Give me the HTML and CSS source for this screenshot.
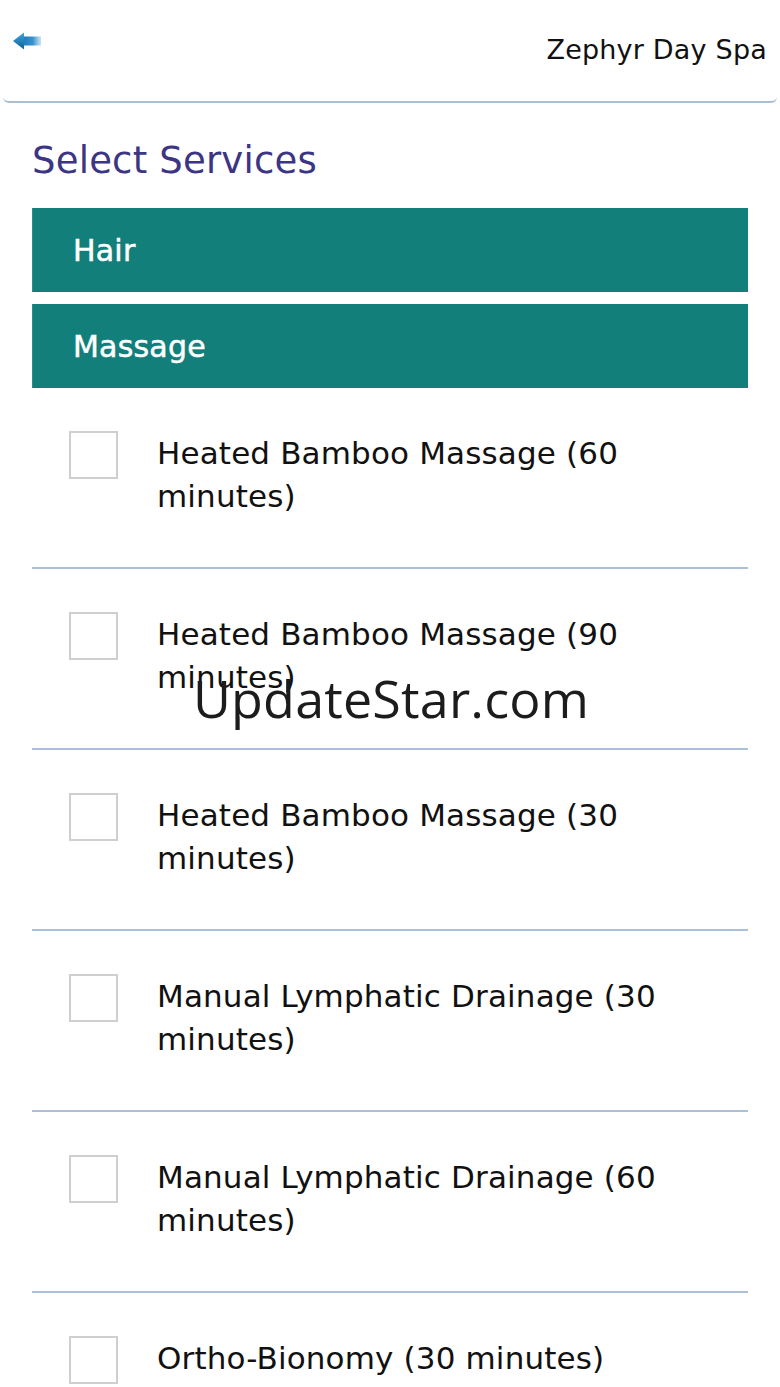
FILE: index.html
```html
<!DOCTYPE html>
<html lang="en">
<head>
<meta charset="utf-8">
<title>Zephyr Day Spa - Select Services</title>
<link rel="stylesheet" href="styles.css">
</head>
<body>
<header class="topbar">
  <a class="back" href="#" aria-label="Back">
    <svg width="30" height="22" viewBox="0 0 30 22">
      <defs>
        <linearGradient id="shaft" x1="0" y1="0" x2="1" y2="0">
          <stop offset="0" stop-color="#1677b8"/>
          <stop offset="0.6" stop-color="#3a93cf"/>
          <stop offset="1" stop-color="#6aaad6" stop-opacity="0.35"/>
        </linearGradient>
        <linearGradient id="head" x1="0" y1="0" x2="0" y2="1">
          <stop offset="0" stop-color="#39a6e0"/>
          <stop offset="1" stop-color="#0f5f98"/>
        </linearGradient>
      </defs>
      <rect x="9" y="6.5" width="20" height="9" fill="url(#shaft)"/>
      <path d="M1 11 L12 2.5 L12 19.5 Z" fill="url(#head)"/>
    </svg>
  </a>
  <div class="brand">Zephyr Day Spa</div>
</header>

<main class="content">
  <h1 class="page-title">Select Services</h1>

  <div class="category">Hair</div>
  <div class="category">Massage</div>

  <ul class="services">
    <li class="service"><span class="check"></span><span class="label">Heated Bamboo Massage (60 minutes)</span></li>
    <li class="service"><span class="check"></span><span class="label">Heated Bamboo Massage (90 minutes)</span></li>
    <li class="service"><span class="check"></span><span class="label">Heated Bamboo Massage (30 minutes)</span></li>
    <li class="service"><span class="check"></span><span class="label">Manual Lymphatic Drainage (30 minutes)</span></li>
    <li class="service"><span class="check"></span><span class="label">Manual Lymphatic Drainage (60 minutes)</span></li>
    <li class="service"><span class="check"></span><span class="label">Ortho-Bionomy (30 minutes)</span></li>
  </ul>
</main>

<div class="watermark">UpdateStar.com</div>
</body>
</html>
```

FILE: styles.css
```css
html, body {
  margin: 0;
  padding: 0;
  background: #ffffff;
}

body {
  font-family: "DejaVu Sans", Verdana, sans-serif;
  color: #111111;
  position: relative;
  height: 1387px;
  overflow: hidden;
}

.topbar {
  display: flex;
  justify-content: space-between;
  align-items: flex-start;
  height: 101px;
  margin: 0 3px;
  padding: 0 10px 0 9px;
  border-bottom: 2px solid #a9bfd8;
  border-radius: 0 0 6px 6px;
}

.back {
  display: block;
  margin-top: 30px;
  width: 30px;
  height: 22px;
}

.back svg {
  display: block;
}

.brand {
  margin-top: 34px;
  font-size: 27px;
  line-height: 32px;
  letter-spacing: 0.2px;
  color: #111111;
}

.content {
  padding: 0 32px;
}

.page-title {
  margin: 36px 0 25px;
  font-size: 37px;
  line-height: 44px;
  letter-spacing: 0.2px;
  font-weight: normal;
  color: #3b3584;
}

.category {
  display: flex;
  align-items: center;
  height: 84px;
  margin-bottom: 12px;
  padding-left: 41px;
  background: #137f7b;
  box-shadow: inset 1px 0 0 #2a8f8b;
  color: #ffffff;
  font-size: 30px;
  letter-spacing: 0.2px;
  -webkit-text-stroke: 0.5px #ffffff;
}

.category:last-of-type {
  margin-bottom: 0;
}

.services {
  list-style: none;
  margin: 0;
  padding: 0;
}

.service {
  display: flex;
  align-items: flex-start;
  gap: 39px;
  height: 136px;
  padding: 43px 0 0 37px;
  border-bottom: 2px solid #abc0d8;
}

.check {
  flex: none;
  width: 45px;
  height: 44px;
  border: 2px solid #cfcfcf;
}

.label {
  font-size: 31px;
  line-height: 43px;
  letter-spacing: 0.15px;
  margin-top: 1px;
  max-width: 560px;
}

.watermark {
  position: absolute;
  left: 193px;
  top: 668px;
  font-family: "Open Sans", "Noto Sans", sans-serif;
  font-size: 52px;
  line-height: 60px;
  letter-spacing: 0.2px;
  color: #1c1c1c;
  white-space: nowrap;
}
```
